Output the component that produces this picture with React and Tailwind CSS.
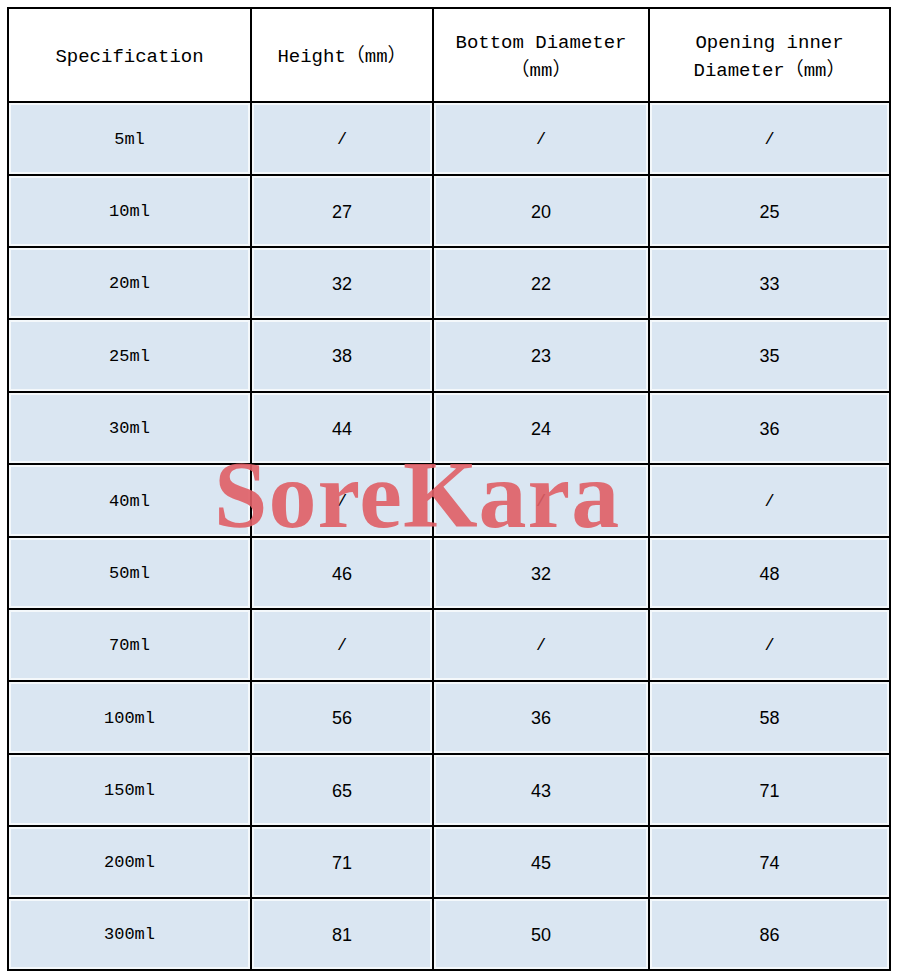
import React from 'react';

const rows = [
    { spec: '5ml', h: '/', bottom: '/', opening: '/', tall: true },
    { spec: '10ml', h: '27', bottom: '20', opening: '25', tall: false },
    { spec: '20ml', h: '32', bottom: '22', opening: '33', tall: false },
    { spec: '25ml', h: '38', bottom: '23', opening: '35', tall: true },
    { spec: '30ml', h: '44', bottom: '24', opening: '36', tall: false },
    { spec: '40ml', h: '/', bottom: '/', opening: '/', tall: true },
    { spec: '50ml', h: '46', bottom: '32', opening: '48', tall: false },
    { spec: '70ml', h: '/', bottom: '/', opening: '/', tall: false },
    { spec: '100ml', h: '56', bottom: '36', opening: '58', tall: true },
    { spec: '150ml', h: '65', bottom: '43', opening: '71', tall: false },
    { spec: '200ml', h: '71', bottom: '45', opening: '74', tall: false },
    { spec: '300ml', h: '81', bottom: '50', opening: '86', tall: false },
];

const mono = { fontFamily: '"Liberation Mono", "Noto Sans CJK SC", monospace' };

// numbers look like a sans face, the slashes and "ml" like the mono one
const Value = ({ text }) => (
    <span
        className={text === '/' ? 'text-[17px]' : 'text-[18px]'}
        style={text === '/' ? mono : { fontFamily: '"Liberation Sans", Arial, sans-serif' }}
    >
        {text}
    </span>
);

const HeadCell = ({ children, last }) => (
    <div
        className={`h-[94px] flex items-center justify-center text-center border-b-2 border-black bg-white text-[19px] leading-[28px] text-black ${last ? '' : 'border-r-2'}`}
        style={mono}
    >
        <div className="pt-1">{children}</div>
    </div>
);

const Cell = ({ children, tall, last }) => (
    <div
        className={`${tall ? 'h-[73px]' : 'h-[72px]'} flex items-center justify-center pt-[2px] border-b-2 border-black bg-[#dae6f2] shadow-[inset_0_0_0_2px_#f4f8fb] text-black ${last ? '' : 'border-r-2'}`}
    >
        {children}
    </div>
);

const App = () => {
    return (
        <div className="relative w-[900px] h-[976px] bg-white overflow-hidden">
            <div className="pt-[7px] pl-[7px]">
                <div className="w-[884px] border-2 border-b-0 border-black grid grid-cols-[243px_182px_216px_239px]">
                    <HeadCell>Specification</HeadCell>
                    <HeadCell>Height（mm）</HeadCell>
                    <HeadCell>
                        Bottom Diameter
                        <br />
                        （mm）
                    </HeadCell>
                    <HeadCell last>
                        Opening inner
                        <br />
                        Diameter（mm）
                    </HeadCell>

                    {rows.map((r) => (
                        <React.Fragment key={r.spec}>
                            <Cell tall={r.tall}>
                                <span className="text-[17px]" style={mono}>{r.spec}</span>
                            </Cell>
                            <Cell tall={r.tall}><Value text={r.h} /></Cell>
                            <Cell tall={r.tall}><Value text={r.bottom} /></Cell>
                            <Cell tall={r.tall} last><Value text={r.opening} /></Cell>
                        </React.Fragment>
                    ))}
                </div>
            </div>

            {/* Watermark over the table */}
            <div
                className="absolute left-[214px] top-[447px] text-[96px] leading-none font-bold tracking-[1px] text-[#e05f66] opacity-90 pointer-events-none"
                style={{ fontFamily: '"Liberation Serif", "Times New Roman", serif' }}
            >
                SoreKara
            </div>
        </div>
    );
};

export default App;
